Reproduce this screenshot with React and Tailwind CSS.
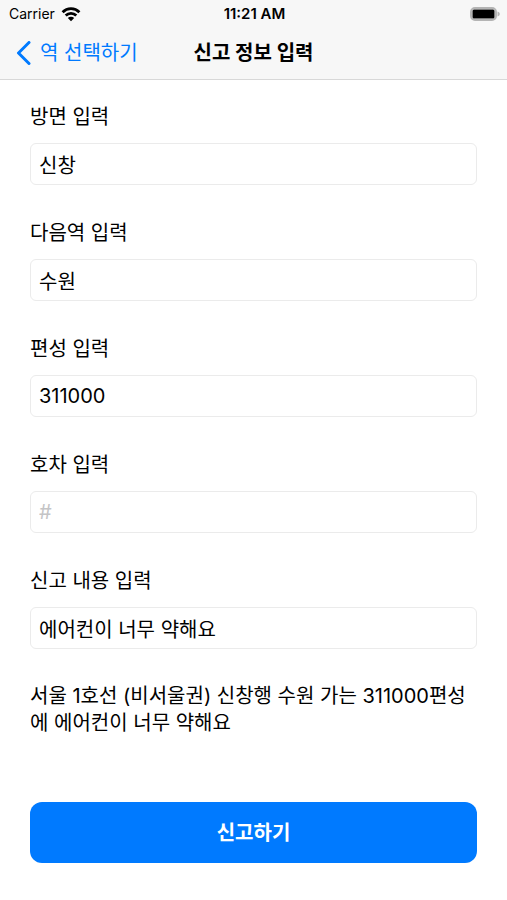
import React, { useState } from 'react';

const fields = [
  { id: 'direction', label: '방면 입력', value: '신창' },
  { id: 'nextStation', label: '다음역 입력', value: '수원' },
  { id: 'trainNo', label: '편성 입력', value: '311000' },
  { id: 'carNo', label: '호차 입력', value: '', placeholder: '#' },
  { id: 'content', label: '신고 내용 입력', value: '에어컨이 너무 약해요' },
];

function StatusBar() {
  return (
    <div className="grid grid-cols-3 items-center h-7 pl-[9px] pr-[7px] text-sm">
      <div className="flex items-center gap-1.5">
        <span>Carrier</span>
        <svg className="w-5 h-4" viewBox="0 0 20 16" fill="none" stroke="#000" strokeWidth="2.8">
          <path d="M1.600 6.200a11.800 11.800 0 0 1 16.800 0" />
          <path d="M4.700 9.500a7.500 7.500 0 0 1 10.600 0" />
          <path d="M10 15.200l-3.200-3.200a4.500 4.500 0 0 1 6.400 0z" fill="#000" stroke="none" />
        </svg>
      </div>
      <span className="text-center text-[15px] font-semibold">11:21 AM</span>
      <svg className="w-8 h-4 justify-self-end" viewBox="0 0 32 16">
        <rect x="3" y="2" width="25" height="12" rx="4" fill="none" stroke="#b4b4b4" strokeWidth="2" />
        <rect x="4.500" y="3.500" width="22" height="9" rx="1.500" fill="#000" />
        <path d="M29.500 5.500c3 1 3 4 0 5z" fill="#b4b4b4" />
      </svg>
    </div>
  );
}

function App() {
  const [form, setForm] = useState(Object.fromEntries(fields.map((f) => [f.id, f.value])));

  const handleChange = (e) => {
    setForm({ ...form, [e.target.id]: e.target.value });
  };

  const message = `서울 1호선 (비서울권) ${form.direction}행 ${form.nextStation} 가는 ${form.trainNo}편성에 ${form.content}`;

  return (
    <div className="min-h-screen bg-white text-black font-[Inter,'Noto_Sans_CJK_KR',sans-serif]">
      <header className="bg-[#f7f7f7] border-b border-[#d8d8d8]">
        <StatusBar />
        <nav className="grid grid-cols-[1fr_auto_1fr] items-center h-[51px] px-4 pb-0.5 text-[20px]">
          <a href="#stations" className="flex items-center gap-2 text-[#007aff]">
            <svg className="w-4 h-6" viewBox="0 0 16 24" fill="none" stroke="currentColor" strokeWidth="3" strokeLinecap="round" strokeLinejoin="round">
              <path d="M13 1.500L2.500 12 13 22.500" />
            </svg>
            역 선택하기
          </a>
          <h1 className="font-bold">신고 정보 입력</h1>
        </nav>
      </header>

      <form className="px-[30px] pt-[23px]" onSubmit={(e) => e.preventDefault()}>
        {fields.map((f) => (
          <div key={f.id} className="mb-[34px]">
            <label htmlFor={f.id} className="block text-[20px] leading-7 mb-3">{f.label}</label>
            <input
              id={f.id}
              type="text"
              value={form[f.id]}
              placeholder={f.placeholder}
              onChange={handleChange}
              className="block w-full h-[42px] px-2 text-[20px] border border-[#ebebeb] rounded-md placeholder:text-[#c4c4c6]"
            />
          </div>
        ))}

        <p className="text-[20px] leading-[27px]">{message}</p>

        <button type="submit" className="w-full h-[61px] mt-[65px] mb-9 rounded-xl bg-[#007aff] text-white text-[20px] font-bold">
          신고하기
        </button>
      </form>
    </div>
  );
}

export default App;
